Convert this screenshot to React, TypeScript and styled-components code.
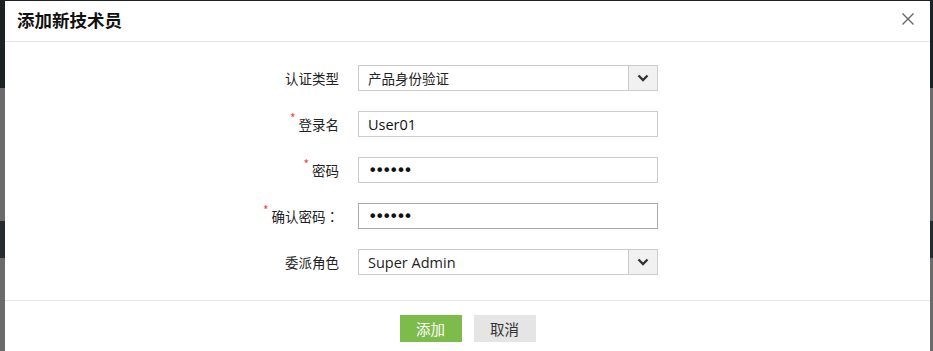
import React from "react"
import styled, { createGlobalStyle } from "styled-components"

const GlobalStyle = createGlobalStyle`
  html, body {
    margin: 0;
    padding: 0;
    height: 351px;
    overflow: hidden;
  }
  body {
    font-family: "Noto Sans CJK SC", "Noto Sans", sans-serif;
    background: linear-gradient(
      to bottom,
      #1d2225 0px,
      #1d2225 88px,
      #6b6b6b 88px,
      #6b6b6b 221px,
      #262b30 221px,
      #262b30 258px,
      #6b6b6b 258px
    );
  }
`

const fields = [
  { label: "认证类型", kind: "select", value: "产品身份验证" },
  { label: "登录名", kind: "text", value: "User01", required: true },
  { label: "密码", kind: "password", value: "123456", required: true },
  { label: "确认密码", colon: true, kind: "password", value: "123456", required: true, focus: true },
  { label: "委派角色", kind: "select", value: "Super Admin", latin: true },
]

const App = () => {
  return (
    <>
      <GlobalStyle />
      <Dialog>
        <Header>
          <Title>添加新技术员</Title>
          <CloseButton aria-label="close">
            <svg width="12" height="12" viewBox="0 0 12 12">
              <path d="M0.5 0.5 L11.5 11.5 M11.5 0.5 L0.5 11.5" stroke="#666" strokeWidth="1.4" fill="none" />
            </svg>
          </CloseButton>
        </Header>
        <Form>
          {fields.map(f => (
            <React.Fragment key={f.label}>
              <Label>
                {f.required && <Star>*</Star>}
                {f.label}
                {f.colon && <Colon>：</Colon>}
              </Label>
              {f.kind === "select" ? (
                <Select>
                  <SelectText $latin={!!f.latin}>{f.value}</SelectText>
                  <Arrow>
                    <svg width="12" height="8" viewBox="0 0 12 8">
                      <path d="M1.5 1.5 L6 6 L10.5 1.5" stroke="#333" strokeWidth="2.4" fill="none" />
                    </svg>
                  </Arrow>
                </Select>
              ) : (
                <Input
                  type={f.kind}
                  defaultValue={f.value}
                  autoFocus={f.focus}
                  $focused={!!f.focus}
                  $password={f.kind === "password"}
                />
              )}
            </React.Fragment>
          ))}
        </Form>
        <Footer>
          <Button $primary>添加</Button>
          <Button>取消</Button>
        </Footer>
      </Dialog>
    </>
  )
}

const Dialog = styled.div`
  margin: 1px 0 0 5px;
  width: 925px;
  height: 350px;
  background: #fff;
  display: flex;
  flex-direction: column;
`

const Header = styled.div`
  height: 40px;
  border-bottom: 1px solid #e5e5e5;
  display: flex;
  align-items: center;
  justify-content: space-between;
  padding: 0 16px 0 12px;
`

const Title = styled.h1`
  margin: 0;
  font-size: 17.5px;
  font-weight: 700;
  color: #111;
  line-height: 1;
  padding-bottom: 2px;
`

const CloseButton = styled.span`
  display: flex;
  width: 12px;
  height: 12px;
  margin-bottom: 5px;
`

const Form = styled.div`
  display: grid;
  grid-template-columns: 334px 300px;
  column-gap: 19px;
  row-gap: 20px;
  padding: 23px 0 25px;
  border-bottom: 1px solid #e5e5e5;
`

const Label = styled.label`
  display: flex;
  align-items: center;
  justify-content: flex-end;
  font-size: 13.5px;
  color: #222;
  height: 26px;
`

const Colon = styled.span`
  font-family: "Noto Sans CJK TC", "Noto Sans CJK SC", sans-serif;
`

const Star = styled.span`
  color: #ff3b3b;
  font-size: 12px;
  align-self: flex-start;
  margin-top: 1px;
  margin-right: 3px;
  line-height: 1;
`

const Select = styled.div`
  height: 26px;
  box-sizing: border-box;
  border: 1px solid #ccc;
  display: flex;
  align-items: stretch;
`

const SelectText = styled.span<{ $latin: boolean }>`
  flex: 1;
  display: flex;
  align-items: center;
  padding-left: 9px;
  font-size: ${p => (p.$latin ? "14.5px" : "13.5px")};
  font-family: ${p => (p.$latin ? `"Open Sans", "Noto Sans", sans-serif` : "inherit")};
  color: #222;
`

const Arrow = styled.span`
  width: 28px;
  background: #f1f1f1;
  border-left: 1px solid #ccc;
  display: flex;
  align-items: center;
  justify-content: center;
`

const Input = styled.input<{ $focused: boolean; $password: boolean }>`
  height: 26px;
  box-sizing: border-box;
  border: 1px solid ${p => (p.$focused ? "#aaa" : "#ccc")};
  outline: none;
  padding: 0 9px;
  font-family: ${p => (p.$password ? `"DejaVu Sans", sans-serif` : `"Open Sans", "Noto Sans", sans-serif`)};
  font-size: ${p => (p.$password ? "16px" : "14.5px")};
  letter-spacing: ${p => (p.$password ? "-2.4px" : "0")};
  color: #111;
  caret-color: #000;
`

const Footer = styled.div`
  display: flex;
  justify-content: center;
  gap: 12px;
  padding-top: 14px;
`

const Button = styled.button<{ $primary?: boolean }>`
  width: 62px;
  height: 27px;
  border: none;
  padding: 0;
  font-family: inherit;
  font-size: 14.5px;
  background: ${p => (p.$primary ? "#7dbb4a" : "#e5e5e5")};
  color: ${p => (p.$primary ? "#fff" : "#333")};
`

export default App
